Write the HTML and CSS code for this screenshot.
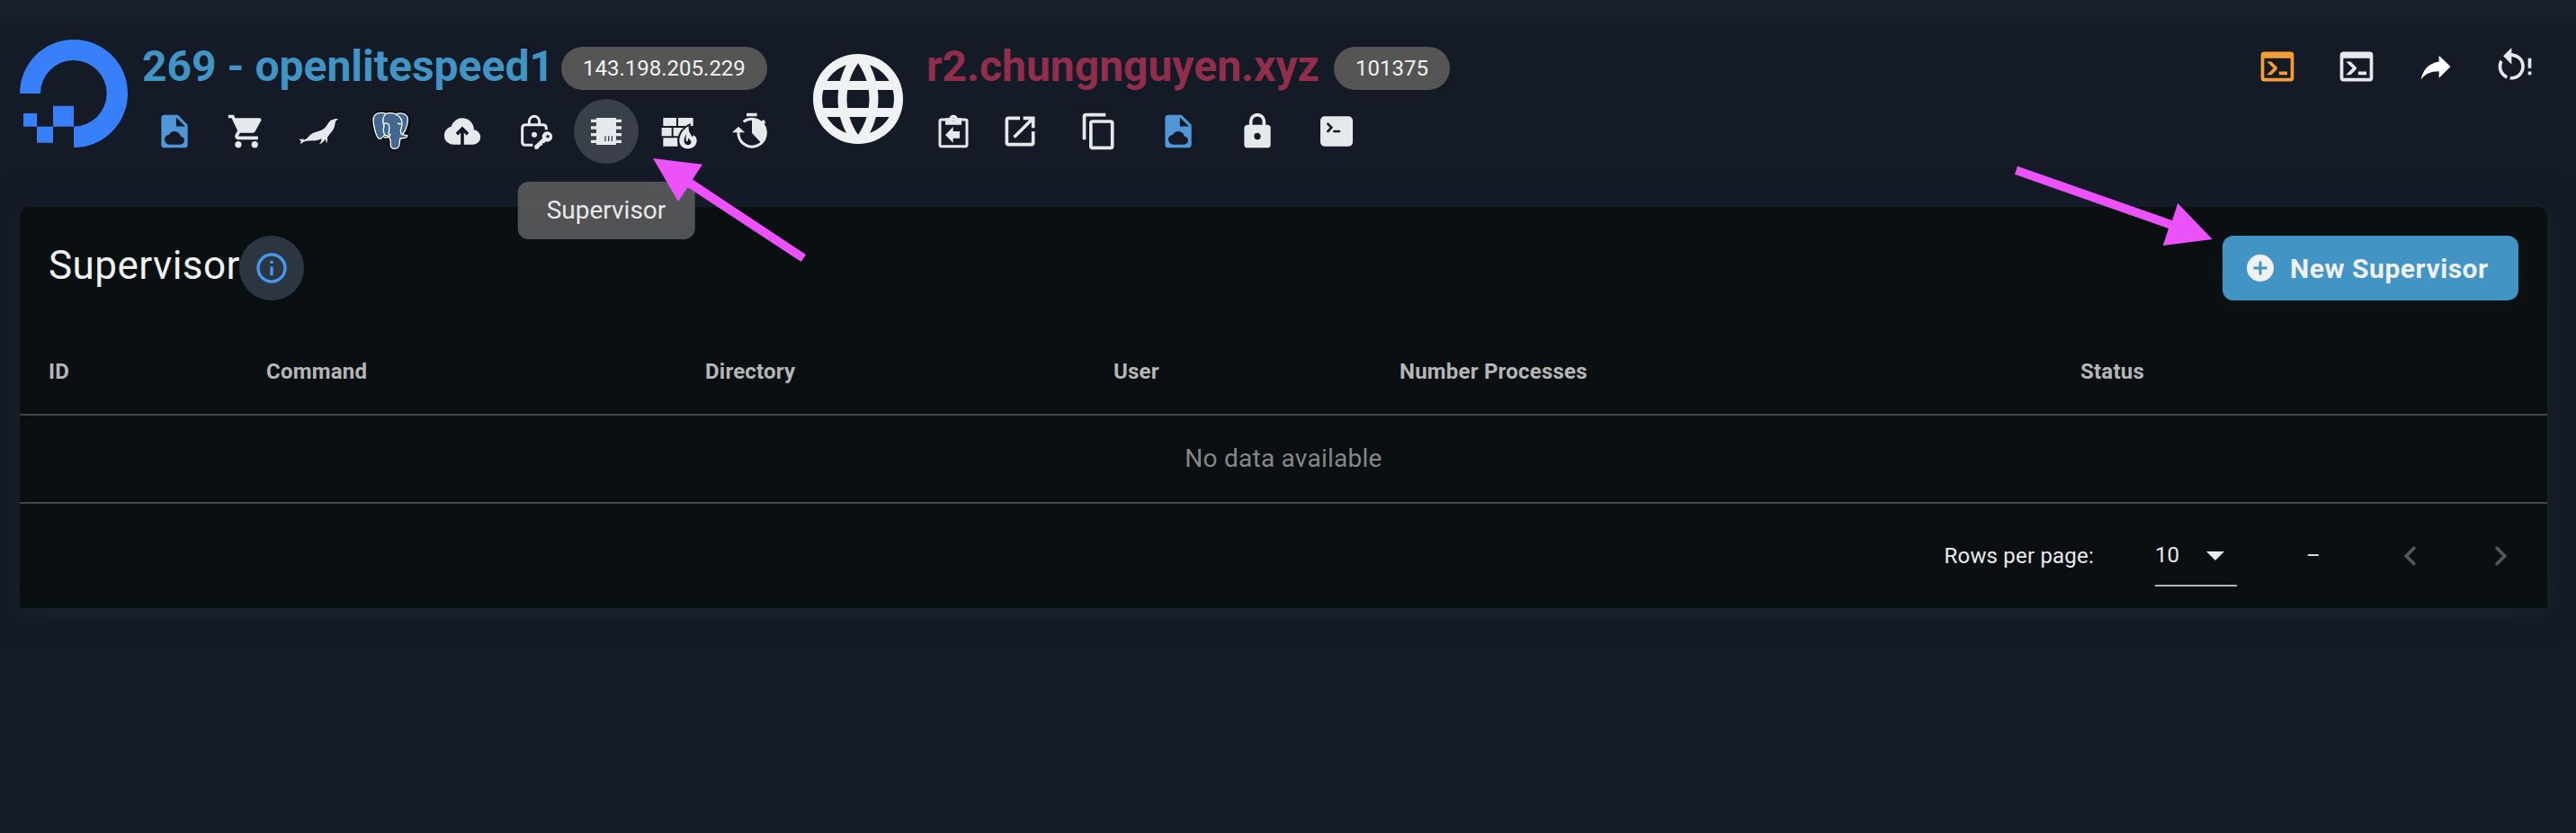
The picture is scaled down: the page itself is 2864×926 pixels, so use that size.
FILE: index.html
```html
<!DOCTYPE html>
<html lang="en">
<head>
<meta charset="utf-8">
<title>Supervisor</title>
<link rel="stylesheet" href="styles.css">
</head>
<body>
<svg width="0" height="0" class="defs">
  <symbol id="file-cloud" viewBox="0 0 24 24"><path fill-rule="evenodd" d="M14,2H6A2,2 0 0,0 4,4V20A2,2 0 0,0 6,22H18A2,2 0 0,0 20,20V8L14,2M13,9V3.5L18.5,9H13M15.68,15C15.34,13.3 13.82,12 12,12C10.55,12 9.3,12.82 8.68,14C7.17,14.18 6,15.45 6,17A3,3 0 0,0 9,20H15.5A2.5,2.5 0 0,0 18,17.5C18,16.18 16.97,15.11 15.68,15Z"/></symbol>
  <symbol id="console" viewBox="0 0 24 24"><path d="M20,19V7H4V19H20M20,3A2,2 0 0,1 22,5V19A2,2 0 0,1 20,21H4A2,2 0 0,1 2,19V5C2,3.89 2.9,3 4,3H20M13,17V15H18V17H13M9.58,13L5.57,9H8.4L11.7,12.3C12.09,12.69 12.09,13.33 11.7,13.72L8.42,17H5.59L9.58,13Z"/></symbol>
</svg>

<header class="topbar">
  <svg class="logo" viewBox="0 0 360 360"><path d="M0 180A180 180 0 1 1 180 360V290A110.500 110.500 0 1 0 69 180ZM111 221H180V290H111ZM57 290H111V344H57ZM12 246H57V290H12Z"/></svg>
  <section class="server">
    <div class="heading">
      <h1 class="title title-server">269 - openlitespeed1</h1>
      <span class="chip">143.198.205.229</span>
    </div>
    <nav class="actions">
      <a class="btn blue"><svg class="icon"><use href="#file-cloud"/></svg></a>
      <a class="btn"><svg class="icon" viewBox="0 0 24 24"><path d="M17,18A2,2 0 0,1 19,20A2,2 0 0,1 17,22C15.89,22 15,21.1 15,20C15,18.89 15.89,18 17,18M1,2H4.27L5.21,4H20A1,1 0 0,1 21,5C21,5.17 20.95,5.34 20.88,5.5L17.3,11.97C16.96,12.58 16.3,13 15.55,13H8.1L7.2,14.63L7.17,14.75A0.25,0.25 0 0,0 7.42,15H19V17H7C5.89,17 5,16.1 5,15C5,14.65 5.09,14.32 5.24,14.04L6.6,11.59L3,4H1V2M7,18A2,2 0 0,1 9,20A2,2 0 0,1 7,22C5.89,22 5,21.1 5,20C5,18.89 5.89,18 7,18Z"/></svg></a>
      <a class="btn"><svg class="icon" viewBox="-66 -66 132 132"><path d="M66 -42L62 -38Q57 -35 56 -28Q53 -10 47 -2L34 14L30 20Q31 31 28 39Q25 36 24 26L14 37Q10 42 3 42Q9 37 11 25Q-4 32 -18 31Q-34 31 -44 33L-52 37L-60 43Q-61 38 -57 34Q-61 32 -64 25Q-57 28 -51 25L-48 29Q-40 27 -33 18Q-24 6 -8 2Q12 -3 22 -12Q30 -21 34 -29Q40 -39 50 -40L58 -42Z"/></svg></a>
      <a class="btn"><svg class="icon wide" viewBox="-66 -66 132 132">
        <g class="elephant-edge"><path d="M-15 -59C-35 -66 -57 -60 -57 -38C-57 -16 -46 24 -36 25C-30 26 -25 19 -20 13L-7 15L0 28L1 48C1 61 27 63 30 45L33 23C46 24 57 21 57 14L47 14C58 -2 64 -43 54 -52C43 -64 26 -61 18 -57C7 -62 -5 -62 -15 -59Z"/></g>
        <g class="elephant">
          <path d="M-15 -59C-35 -66 -57 -60 -57 -38C-57 -16 -46 24 -36 25C-30 26 -25 19 -20 13L-7 15L0 28L1 48C1 61 27 63 30 45L33 23C46 24 57 21 57 14L39 11C54 -2 64 -43 54 -52C43 -64 26 -61 18 -57C7 -62 -5 -62 -15 -59Z"/>
          <path d="M-15 -59C-26 -47 -26 -30 -21 -18C-25 -5 -23 6 -17 14M-22 -24C-14 -30 -6 -27 -4 -20L-4 0C-8 6 -7 9 0 11C-3 19 -14 21 -22 20M18 -57C34 -49 40 -35 39 -22L34 -2L37 11M24 -27L35 -24"/>
        </g></svg></a>
      <a class="btn"><svg class="icon" viewBox="0 0 24 24"><path d="M11 20H6.5Q4.22 20 2.61 18.43 1 16.85 1 14.58 1 12.63 2.17 11.1 3.35 9.57 5.25 9.15 5.88 6.85 7.75 5.43 9.63 4 12 4 14.93 4 16.96 6.04 19 8.07 19 11 20.73 11.2 21.86 12.5 23 13.78 23 15.5 23 17.38 21.69 18.69 20.38 20 18.5 20H13V12.85L14.6 14.4L16 13L12 9L8 13L9.4 14.4L11 12.85Z"/></svg></a>
      <a class="btn"><svg class="icon" viewBox="-66 -66 132 132"><path class="line" d="M40 -5V-11Q40 -22 29 -22H-29Q-40 -22 -40 -11V35Q-40 46 -29 46H-5M-17 -22V-33A17 17 0 0 1 17 -33V-22"/><circle cy="11" r="9"/><path fill-rule="evenodd" d="M43 1A17 17 0 1 1 38 34L33 40H27V47H21L14 57Q10 61 3 60Q-1 55 1 48L27 24A17 17 0 0 1 43 1ZM45 12A5 5 0 1 0 45 22A5 5 0 1 0 45 12Z"/></svg></a>
      <a class="btn active"><svg class="icon" viewBox="-66 -66 132 132"><path fill-rule="evenodd" d="M-33 -45H33V-40H51V-30H33V-17H51V-7H33V6H51V16H33V29H51V39H33V45H-33V39H-51V29H-33V16H-51V6H-33V-7H-51V-17H-33V-30H-51V-40H-33ZM-5 16V33H-1V16ZM6 16V33H10V16ZM17 16V33H21V16Z"/></svg>
        <span class="tooltip">Supervisor</span></a>
      <a class="btn"><svg class="icon wide" viewBox="-66 -66 132 132"><path d="M-50 -45H-6V-18H-50ZM0 -45H50V-18H0ZM-55 -12H-22V16H-55ZM-16 -12H26V16H-16ZM-50 22H-2V50H-50Z"/><path class="flame" d="M35 -17C22 -11 4 6 4 32C4 47 17 58 33 58C50 58 62 46 62 31C62 22 58 17 51 13C50 17 48 18 46 18C44 10 33 4 35 -17Z"/><path class="flame-curl" d="M27 8C22 18 19 24 20 33C21 43 29 47 36 45C43 43 45 36 41 30C38 26 35 25 33 21C34 28 33 33 29 34C25 32 25 22 27 8Z"/></svg></a>
      <a class="btn"><svg class="icon" viewBox="-66 -66 132 132"><path d="M-12 -61H23V-50H-12ZM-60 4L-39 -16L-18 4ZM6 -42V5L37 39A47 47 0 0 0 47 -24L51 -28L48 -37L42 -38L38 -33Q25 -45 6 -42Z"/><path class="line" d="M-39 3A45.500 45.500 0 1 0 37 -28A45.500 45.500 0 0 0 -22 -32"/></svg></a>
    </nav>
  </section>

  <svg class="globe" viewBox="0 0 24 24"><path d="M16.36,14C16.44,13.34 16.5,12.68 16.5,12C16.5,11.32 16.44,10.66 16.36,10H19.74C19.9,10.64 20,11.31 20,12C20,12.69 19.9,13.36 19.74,14M14.59,19.56C15.19,18.45 15.65,17.25 15.97,16H18.92C17.96,17.65 16.43,18.93 14.59,19.56M14.34,14H9.66C9.56,13.34 9.5,12.68 9.5,12C9.5,11.32 9.56,10.65 9.66,10H14.34C14.43,10.65 14.5,11.32 14.5,12C14.5,12.68 14.43,13.34 14.34,14M12,19.96C11.17,18.76 10.5,17.43 10.09,16H13.91C13.5,17.43 12.83,18.76 12,19.96M8,8H5.08C6.03,6.34 7.57,5.06 9.4,4.44C8.8,5.55 8.35,6.75 8,8M5.08,16H8C8.35,17.25 8.8,18.45 9.4,19.56C7.57,18.93 6.03,17.65 5.08,16M4.26,14C4.1,13.36 4,12.69 4,12C4,11.31 4.1,10.64 4.26,10H7.64C7.56,10.66 7.5,11.32 7.5,12C7.5,12.68 7.56,13.34 7.64,14M12,4.03C12.83,5.23 13.5,6.57 13.91,8H10.09C10.5,6.57 11.17,5.23 12,4.03M18.92,8H15.97C15.65,6.75 15.19,5.55 14.59,4.44C16.43,5.07 17.96,6.34 18.92,8M12,2C6.47,2 2,6.5 2,12A10,10 0 0,0 12,22A10,10 0 0,0 22,12A10,10 0 0,0 12,2Z"/></svg>
  <section class="site">
    <div class="heading">
      <h2 class="title title-site">r2.chungnguyen.xyz</h2>
      <span class="chip">101375</span>
    </div>
    <nav class="actions actions-site">
      <a class="btn clip"><svg class="icon" viewBox="-66 -66 132 132"><path class="line" d="M-40 -39H40Q45 -39 45 -34V45Q45 50 40 50H-40Q-45 50 -45 45V-34Q-45 -39 -40 -39Z"/><path fill-rule="evenodd" d="M-27 -44H-14A14.500 14.500 0 0 1 14 -44H27V-22H-27ZM0 -44A5 5 0 1 0 0 -34A5 5 0 1 0 0 -44ZM-27 12L-1 -15V0H21V23H-1V38Z"/></svg></a>
      <a class="btn"><svg class="icon" viewBox="0 0 24 24"><path d="M14,3V5H17.59L7.76,14.83L9.17,16.24L19,6.41V10H21V3M19,19H5V5H12V3H5C3.89,3 3,3.9 3,5V19A2,2 0 0,0 5,21H19A2,2 0 0,0 21,19V12H19V19Z"/></svg></a>
      <a class="btn"><svg class="icon" viewBox="0 0 24 24"><path d="M19,21H8V7H19M19,5H8A2,2 0 0,0 6,7V21A2,2 0 0,0 8,23H19A2,2 0 0,0 21,21V7A2,2 0 0,0 19,5M16,1H4A2,2 0 0,0 2,3V17H4V3H16V1Z"/></svg></a>
      <a class="btn blue"><svg class="icon"><use href="#file-cloud"/></svg></a>
      <a class="btn"><svg class="icon" viewBox="0 0 24 24"><path d="M12,17A2,2 0 0,0 14,15C14,13.89 13.1,13 12,13A2,2 0 0,0 10,15A2,2 0 0,0 12,17M18,8A2,2 0 0,1 20,10V20A2,2 0 0,1 18,22H6A2,2 0 0,1 4,20V10C4,8.89 4.9,8 6,8H7V6A5,5 0 0,1 12,1A5,5 0 0,1 17,6V8H18M12,3A3,3 0 0,0 9,6V8H15V6A3,3 0 0,0 12,3Z"/></svg></a>
      <a class="btn"><svg class="icon" viewBox="-66 -66 132 132"><rect x="-54" y="-50" width="108" height="100" rx="14"/><path class="prompt" d="M-29 -25L-17 -12.500L-29 0M-8 0H9"/></svg></a>
    </nav>
  </section>

  <nav class="tools">
    <a class="btn orange"><svg class="icon"><use href="#console"/></svg></a>
    <a class="btn"><svg class="icon"><use href="#console"/></svg></a>
    <a class="btn white"><svg class="icon" viewBox="0 0 24 24"><path d="M21,12L14,5.300V9C7,10 4,15 3,20C5.500,16.500 9,14.900 14,14.900V19L21,12Z"/></svg></a>
    <a class="btn"><svg class="icon" viewBox="2 0 24 24"><path d="M12,4C14.1,4 16.1,4.8 17.6,6.3C20.7,9.4 20.7,14.5 17.6,17.6C15.8,19.5 13.3,20.2 10.9,19.9L11.4,17.9C13.1,18.1 14.9,17.5 16.2,16.2C18.5,13.9 18.5,10.1 16.2,7.7C15.1,6.6 13.5,6 12,6V10.6L7,5.6L12,0.6V4M6.3,17.6C3.7,15 3.3,11 5.1,7.9L6.6,9.4C5.5,11.6 5.9,14.4 7.8,16.2C8.3,16.7 8.9,17.1 9.6,17.4L9,19.4C8,19 7.1,18.4 6.3,17.6M22,7H24V13H22ZM22,15H24V17H22Z"/></svg></a>
  </nav>
</header>

<main class="card">
  <div class="card-head">
    <h3 class="card-title">Supervisor</h3>
    <span class="info"><svg viewBox="0 0 24 24"><path d="M11,9H13V7H11M12,20C7.59,20 4,16.41 4,12C4,7.59 7.59,4 12,4C16.41,4 20,7.59 20,12C20,16.41 16.41,20 12,20M12,2A10,10 0 0,0 2,12A10,10 0 0,0 12,22A10,10 0 0,0 22,12A10,10 0 0,0 12,2M11,17H13V11H11V17Z"/></svg></span>
    <button class="new"><svg viewBox="0 0 24 24"><path d="M17,13H13V17H11V13H7V11H11V7H13V11H17M12,2A10,10 0 0,0 2,12A10,10 0 0,0 12,22A10,10 0 0,0 22,12A10,10 0 0,0 12,2Z"/></svg><span>New Supervisor</span></button>
  </div>
  <table class="grid">
    <thead><tr><th class="c-id">ID</th><th class="c-command">Command</th><th class="c-directory">Directory</th><th class="c-user">User</th><th class="c-processes">Number Processes</th><th class="c-status">Status</th></tr></thead>
    <tbody><tr><td colspan="6">No data available</td></tr></tbody>
  </table>
  <footer class="pager">
    <span class="pager-label">Rows per page:</span>
    <span class="select"><span>10</span><svg viewBox="0 0 24 24"><path d="M7,10L12,15L17,10H7Z"/></svg></span>
    <span class="range">–</span>
    <svg class="page-arrow" viewBox="0 0 24 24"><path d="M15.41,16.58L10.83,12L15.41,7.41L14,6L8,12L14,18L15.41,16.58Z"/></svg>
    <svg class="page-arrow" viewBox="0 0 24 24"><path d="M8.59,16.58L13.17,12L8.59,7.41L10,6L16,12L10,18L8.59,16.58Z"/></svg>
  </footer>
</main>

<svg class="pointers" viewBox="0 0 2864 926"><path d="M726 176L781 182.700L770 199.500L896 283L890.700 291L764.700 208.300L754 224ZM2459.700 266L2421.300 226L2415 245L2243 184.700L2240 193.700L2411 254L2404.700 273Z"/></svg>
</body>
</html>
```

FILE: styles.css
```css
* { box-sizing: border-box; }
body {
  margin: 0;
  width: 2864px;
  height: 926px;
  position: relative;
  overflow: hidden;
  background: linear-gradient(#1b222b 0, #19202a 12px, #141b26 38px) #141b26;
  color: #f0f1f2;
  font-family: Roboto, "Liberation Sans", sans-serif;
}
h1, h2, h3 { margin: 0; }
.defs { position: absolute; }
svg { display: block; flex: none; fill: currentColor; }

.topbar { display: flex; height: 230px; padding: 44px 32px 0 22px; align-items: flex-start; }
.logo { width: 120px; height: 120px; margin-right: 16px; color: #3880fa; }
.server { width: 736px; }
.site { width: 600px; margin-left: 10px; }
.heading { display: flex; align-items: center; height: 64px; }
.title { flex: none; font-size: 48px; font-weight: 700; line-height: 60px; height: 64px; white-space: nowrap; }
.title-server { width: 466px; color: #4294c4; }
.title-site { width: 453px; margin-left: 6px; color: #902e4b; }
.chip { height: 48px; line-height: 48px; padding: 0 24px; border-radius: 24px; background: #555; font-size: 24px; }
.globe { width: 120px; height: 120px; margin-top: 6px; }

.actions { display: flex; gap: 8px; margin-top: 2px; }
.actions-site { gap: 16px; }
.btn { position: relative; display: flex; flex: none; width: 72px; height: 72px; align-items: center; justify-content: center; border-radius: 50%; color: #e6e9ec; }
.btn.clip { margin-right: -14px; }
.btn.active { background: #3a404a; }
.btn.blue { color: #5096d8; }
.btn.orange { color: #f49d37; }
.btn.white { color: #fff; }
.icon { width: 44px; height: 44px; }
.wide { overflow: visible; }
.line { fill: none; stroke: currentColor; stroke-width: 9; }
.prompt { fill: none; stroke: #141b26; stroke-width: 8; stroke-linecap: round; }
.flame { stroke: #141b26; stroke-width: 12; paint-order: stroke; }
.flame-curl { fill: #141b26; }
.elephant { fill: #42688f; stroke: #fff; stroke-width: 4; stroke-linejoin: round; }
.elephant path + path { fill: none; }
.elephant-edge { stroke: #000; stroke-width: 12; stroke-linejoin: round; }
.tools { display: flex; gap: 16px; margin: -6px 0 0 auto; }

.tooltip { position: absolute; z-index: 2; top: 92px; left: 50%; transform: translateX(-50%); height: 64px; line-height: 64px; padding: 0 32px; border-radius: 12px; background: rgba(97, 97, 97, .82); color: #e9e9ea; font-size: 28px; }

.card { width: 2810px; height: 446px; margin-left: 22px; background: #0a0f12; border-radius: 12px 12px 0 0; box-shadow: 0 8px 20px rgba(38, 48, 54, .4), 0 2px 36px rgba(30, 33, 46, .5); }
.card-head { display: flex; height: 136px; padding: 32px; align-items: flex-start; }
.card-title { font-size: 44px; font-weight: 400; line-height: 66px; width: 212px; white-space: nowrap; letter-spacing: .44px; }
.info { display: flex; width: 72px; height: 72px; align-items: center; justify-content: center; border-radius: 50%; background: #2b3641; color: #4896f0; }
.info svg { width: 40px; height: 40px; }
.new { display: flex; align-items: center; width: 329px; height: 72px; margin-left: auto; padding: 0 0 0 24px; border: 0; border-radius: 12px; background: #4294c4; color: #f0f1f2; font: 700 30px Roboto, sans-serif; letter-spacing: .55px; gap: 15px; white-space: nowrap; box-shadow: 0 4px 28px rgba(40, 40, 40, .3); }
.new svg { width: 36px; height: 36px; }

.grid { width: 100%; table-layout: fixed; border-collapse: separate; border-spacing: 0; }
.grid th { height: 96px; padding: 0 0 0 32px; border-bottom: 2px solid #444; text-align: left; font-size: 24px; font-weight: 700; letter-spacing: .22px; color: #b4b6b7; }
.grid td { height: 98px; padding: 0 0 2px; border-bottom: 2px solid #444; text-align: center; font-size: 28px; letter-spacing: .25px; color: #858789; }
.c-id { width: 242px; }
.c-command { width: 488px; }
.c-directory { width: 454px; }
.c-user { width: 318px; }
.c-processes { width: 757px; }

.pager { display: flex; align-items: center; height: 116px; padding-right: 30px; justify-content: flex-end; font-size: 24px; color: #e9ebec; }
.pager-label { margin-right: 68px; letter-spacing: .2px; }
.select { display: flex; align-items: center; width: 91px; height: 68px; margin-right: 77px; border-bottom: 2px solid #b6b7b7; }
.select svg { width: 48px; height: 48px; margin-left: 16px; }
.range { width: 14px; margin-right: 80px; }
.page-arrow { width: 44px; height: 44px; color: #54575a; }
.page-arrow + .page-arrow { margin-left: 56px; }

.pointers { position: absolute; z-index: 3; top: 0; left: 0; width: 2864px; height: 926px; fill: #eb52f9; pointer-events: none; }
```
